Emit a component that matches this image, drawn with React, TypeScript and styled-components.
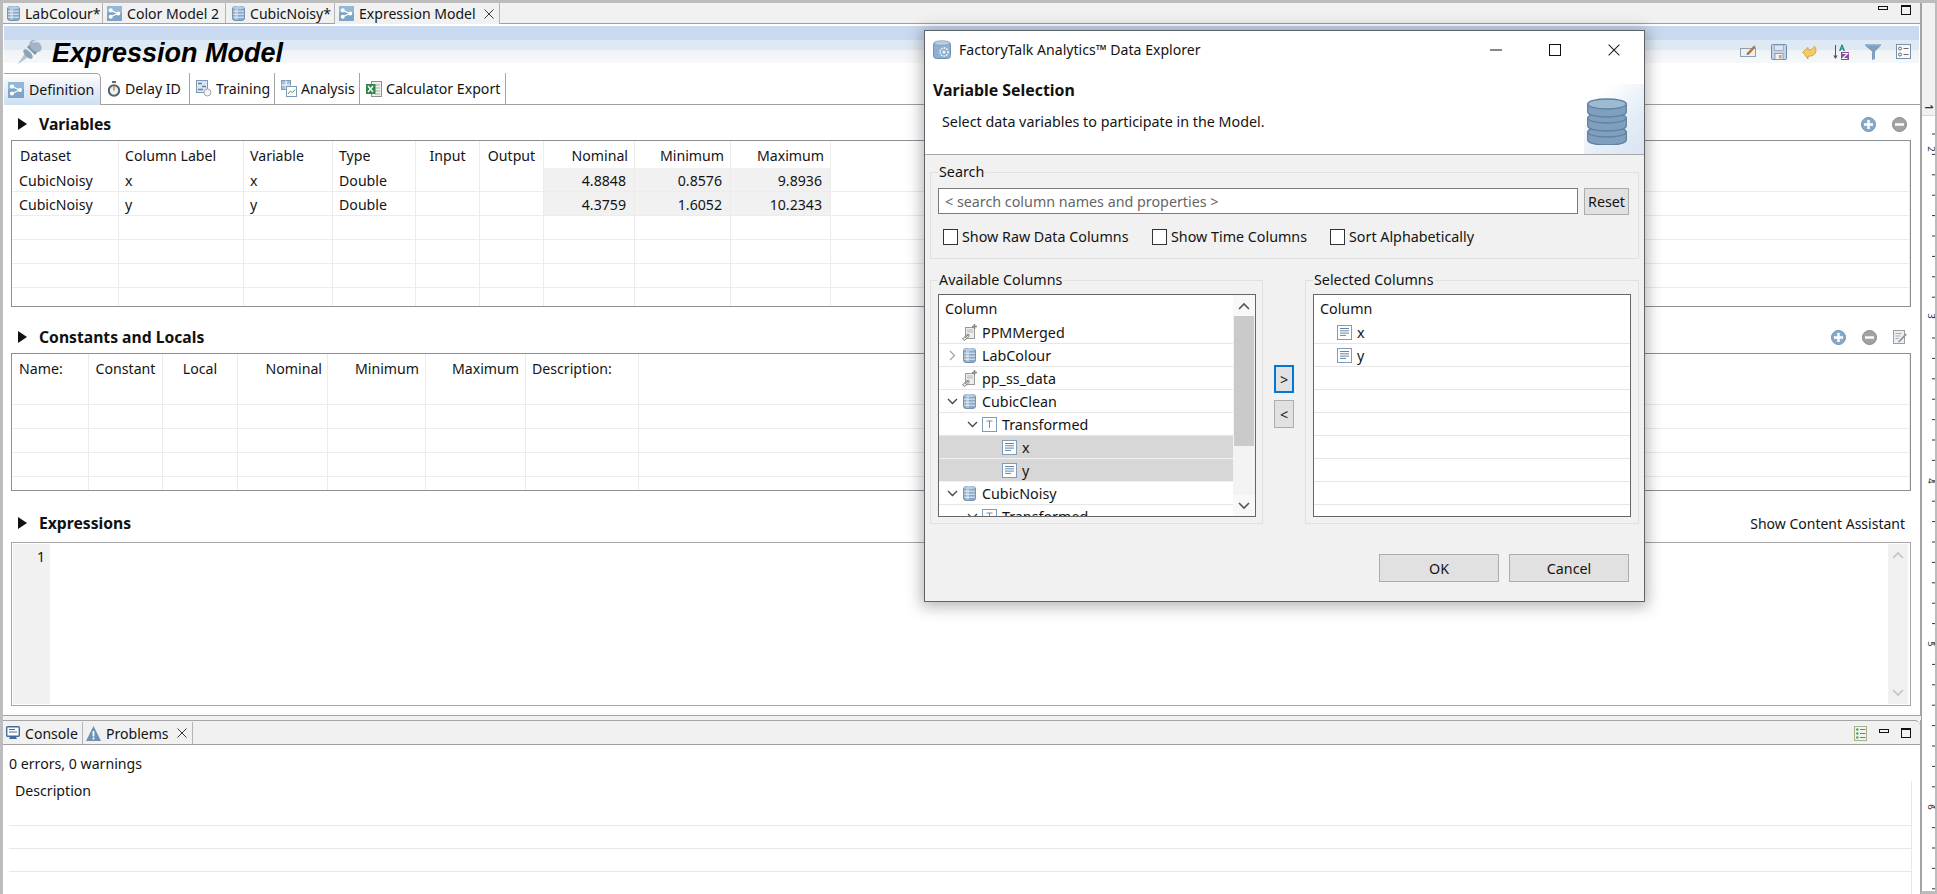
import React from "react";
import styled, { createGlobalStyle } from "styled-components";

const UI = `"Noto Sans", "Open Sans", sans-serif`;

const Global = createGlobalStyle`
  html, body { margin: 0; padding: 0; background: #fff; }
  body { width: 1937px; height: 894px; overflow: hidden; font-family: ${UI}; font-size: 14.15px; color: #141414; }
  * { box-sizing: border-box; }
`;

const Frame = styled.div`
  position: relative; width: 1937px; height: 894px; padding: 3px 2px 3px 3px;
  background: #bcbcbc; display: flex;
`;
const MainColumn = styled.div`width: 1918px; display: flex; flex-direction: column; background: #f4f4f4;`;
const RightRail = styled.div`width: 14px; display: flex; flex-direction: column; background: #fff; border-left: 1px solid #a4a4a4;`;
const RailTop = styled.div`height: 113px; flex: none; background: #f0f1f0; border-bottom: 1px solid #d8d8d8; display: flex; align-items: flex-end; justify-content: center; padding-bottom: 3px;`;
const RailDigit = styled.span`display: block; font-size: 10px; line-height: 10px; font-weight: 600; color: #333; transform: rotate(90deg);`;

/* ---------- top editor ---------- */
const EditorPane = styled.div`height: 713px; flex: none; display: flex; flex-direction: column; background: #fff; border-right: 1px solid #a4a4a4; border-bottom: 1px solid #a4a4a4;`;
const TabStrip = styled.div<{ $h: number }>`
  height: ${p => p.$h}px; flex: none; display: flex; background: #f0f1f0; border-bottom: 1px solid #a0a0a0;
`;
const StripTab = styled.div<{ $w: number; $pad: number; $active?: boolean }>`
  width: ${p => p.$w}px; flex: none; display: flex; align-items: center; gap: 5px; padding-left: ${p => p.$pad}px;
  border-right: 1px solid #b4b4b4; white-space: nowrap; height: calc(100% + ${p => (p.$active ? 1 : 0)}px);
  background: #f0f1f0; position: relative; font-size: 14.05px;
`;
const TabClose = styled.span`margin-left: 3px; display: flex;`;
const StripRight = styled.div`margin-left: auto; display: flex; align-items: flex-start; padding: 2px 9px 0 0; gap: 13px;`;
const MinBox = styled.span`display: block; width: 10px; height: 4px; border: 1px solid #111; margin-top: 1px;`;
const MaxBox = styled.span`display: block; width: 10px; height: 10px; border: 1px solid #111; border-top-width: 2px;`;

const Form = styled.div`flex: 1; display: flex; flex-direction: column; padding-top: 2px; background: #fff;`;
const Banner = styled.div`
  height: 37px; flex: none; margin: 0 1px 0 1px; display: flex; align-items: flex-start; padding: 13px 8px 0 13px;
  background: linear-gradient(#c9daf0 0, #c9daf0 38%, #dfe9f4 38%, #dfe9f4 65%, #f0f3f6 65%, #f6f8f9 100%);
`;
const FormTitle = styled.h1`
  margin: 1px 0 0 9px; font: italic bold 27px/26px "Liberation Sans", Arial, sans-serif; color: #000; white-space: nowrap;
`;
const Toolbar = styled.div`margin-left: auto; display: flex; gap: 15px; padding-top: 5px;`;
const FormTabs = styled.div`
  height: 32px; flex: none; margin: 10px 0 0 1px; display: flex; border-bottom: 1px solid #a0a0a0;
`;
const FormTab = styled.div<{ $w: number; $active?: boolean }>`
  width: ${p => p.$w}px; flex: none; height: ${p => (p.$active ? 32 : 31)}px; display: flex; align-items: center; gap: ${p => (p.$active ? 5 : 4)}px;
  padding-left: ${p => (p.$active ? 4 : 6)}px; white-space: nowrap; border-right: 1px solid #a4a4a4;
  ${p => p.$active ? `background: linear-gradient(#fff 0, #eef3f9 30%, #cddff2 100%); border-top: 1px solid #a4a4a4; border-top-right-radius: 5px;` : ``}
`;

const Section = styled.section<{ $top: number }>`margin-top: ${p => p.$top}px; padding: 0 9px 0 8px;`;
const SectionHead = styled.div<{ $mb: number }>`height: 28px; margin-bottom: ${p => p.$mb}px; display: flex; align-items: center; padding-left: 7px;`;
const Triangle = styled.span`width: 0; height: 0; border-left: 9px solid #111; border-top: 6px solid transparent; border-bottom: 6px solid transparent; margin-right: 12px;`;
const SectionTitle = styled.h2`margin: 0; font-size: 15.7px; font-weight: 700; color: #111;`;
const SectionTools = styled.div`margin-left: auto; display: flex; gap: 16px; padding-right: 4px; align-items: center;`;
const AssistLabel = styled.span`margin-left: auto; padding-right: 6px; font-size: 14px;`;

const Grid = styled.div<{ $h: number }>`height: ${p => p.$h}px; border: 1px solid #8b8f96; overflow: hidden; background: #fff;`;
const GridRow = styled.div<{ $cols: string; $h: number; $line?: boolean }>`
  display: grid; grid-template-columns: ${p => p.$cols}; height: ${p => p.$h}px;
  ${p => (p.$line ? `border-bottom: 1px solid #ececec;` : ``)}
`;
const GridCell = styled.div<{ $align?: string; $shade?: boolean; $pad?: number }>`
  display: flex; align-items: center; height: 100%; white-space: nowrap; border-right: 1px solid #ececec;
  padding: 2px ${p => (p.$align === "right" ? p.$pad ?? 7 : 6)}px 0 ${p => p.$pad && p.$align !== "right" ? p.$pad : 6}px;
  justify-content: ${p => (p.$align === "right" ? "flex-end" : p.$align === "center" ? "center" : "flex-start")};
  background: ${p => (p.$shade ? "#f0f1f0" : "transparent")};
`;

const CodeEditor = styled.div`height: 164px; border: 1px solid #a6a6a6; padding: 1px; display: flex;`;
const Gutter = styled.div`width: 37px; background: #f0f1f0; text-align: right; padding: 3px 5px 0 0; line-height: 20px;`;
const CodeArea = styled.div`flex: 1;`;
const EditorScroll = styled.div`width: 20px; background: #eff0ef; display: flex; flex-direction: column; justify-content: space-between; align-items: center; padding: 7px 0; margin-right: 1px;`;

const PanelGap = styled.div`height: 4px; flex: none; background: #f2f2f2;`;

/* ---------- bottom panel ---------- */
const BottomPanel = styled.div`flex: 1; display: flex; flex-direction: column; background: #fff; border-right: 1px solid #a4a4a4;`;
const PanelStrip = styled.div`
  height: 25px; flex: none; display: flex; background: #f0f1f0; border-top: 1px solid #a4a4a4; border-bottom: 1px solid #a0a0a0;
  border-top-right-radius: 5px; padding-top: 1px;
`;
const PanelRight = styled.div`margin-left: auto; display: flex; align-items: center; padding: 0 9px 0 0; gap: 12px;`;
const PanelMin = styled(MinBox)`margin-top: -5px;`;
const PanelMax = styled(MaxBox)`margin-top: -1px;`;
const PanelBody = styled.div`flex: 1; padding: 9px 8px 0 6px; position: relative;`;
const StatusLine = styled.div`line-height: 20px;`;
const DescHead = styled.div`line-height: 20px; margin-top: 7px; padding-left: 6px; height: 44px; border-right: 1px solid #e8e8e8;`;
const DescRow = styled.div`height: 23px; border-top: 1px solid #e8e8e8; border-right: 1px solid #e8e8e8;`;

/* ---------- dialog ---------- */
const Dialog = styled.div`
  position: absolute; left: 924px; top: 30px; width: 721px; height: 572px; display: flex; flex-direction: column;
  border: 1px solid #5f6368; background: #f0f1f0; box-shadow: 0 2px 14px 3px rgba(0,0,0,.28); font-size: 14.3px;
`;
const DialogTop = styled.div`height: 124px; flex: none; background: #fff; border-bottom: 1px solid #a8a8a8; display: flex; flex-direction: column;`;
const TitleBar = styled.div`height: 37px; flex: none; display: flex; align-items: center; padding-left: 8px; gap: 8px; font-size: 14.1px;`;
const WinControls = styled.div`margin-left: auto; display: flex; align-items: center; gap: 47px; padding-right: 24px;`;
const BannerRow = styled.div`flex: 1; display: flex; justify-content: space-between;`;
const BannerText = styled.div`padding: 12px 0 0 8px;`;
const DialogHeading = styled.h3`margin: 0; font-size: 15.9px; line-height: 20px; font-weight: 700; color: #111;`;
const DialogDesc = styled.p`margin: 12px 0 0 9px; line-height: 20px;`;
const BannerArt = styled.div`
  width: 60px; height: 70px; margin-top: 16px; flex: none; display: flex; padding: 0 0 9px 3px; align-items: flex-end;
  background: linear-gradient(135deg, #fff 20%, #e6eef7 60%, #d9e5f2 100%); border-top-left-radius: 40px;
`;
const DialogBody = styled.div`flex: 1; padding: 7px 5px 0 5px; display: flex; flex-direction: column;`;
const Group = styled.fieldset<{ $h: number }>`
  margin: 0; min-width: 0; height: ${p => p.$h}px; border: 1px solid #dfe0df; padding: 0 7px; position: relative;
`;
const GroupLegend = styled.legend`padding: 0 1px; line-height: 20px; font-size: 14.3px; height: 20px;`;
const SearchRow = styled.div`display: flex; gap: 6px; align-items: flex-start; margin-top: 6px;`;
const SearchInput = styled.div`width: 640px; height: 26px; border: 1px solid #7a7a7a; background: #fff; color: #666; padding-left: 6px; display: flex; align-items: center; white-space: nowrap;`;
const PushButton = styled.div<{ $w: number; $h: number; $focus?: boolean }>`
  width: ${p => p.$w}px; height: ${p => p.$h}px; background: #e1e1e1; display: flex; align-items: center; justify-content: center;
  border: ${p => (p.$focus ? "2px solid #0078d7" : "1px solid #adadad")};
`;
const CheckRow = styled.div`display: flex; margin: 12px 0 0 5px;`;
const CheckItem = styled.label<{ $w: number }>`width: ${p => p.$w}px; display: flex; align-items: center; gap: 4px; white-space: nowrap;`;
const CheckBox = styled.span`width: 15px; height: 16px; border: 1px solid #333; background: #fff; flex: none;`;
const ColumnsGrid = styled.div`display: grid; grid-template-columns: 333px 42px 334px; margin-top: 11px;`;
const MoveButtons = styled.div`display: flex; flex-direction: column; align-items: center; gap: 7px; padding-top: 95px;`;
const TreeBox = styled.div`width: 318px; height: 223px; margin-top: 4px; border: 1px solid #666; background: #fff; display: flex; overflow: hidden;`;
const TreeList = styled.div`flex: 1; min-width: 0;`;
const TreeHeader = styled.div`height: 26px; padding: 4px 0 0 6px; line-height: 20px;`;
const TreeRow = styled.div<{ $indent: number; $selected?: boolean }>`
  height: 23px; flex: none; display: flex; align-items: center; padding-left: ${p => p.$indent}px; white-space: nowrap;
  border-bottom: 1px solid ${p => (p.$selected ? "#f0f1f0" : "#e6e6e6")}; background: ${p => (p.$selected ? "#d7d7d7" : "#fff")};
`;
const Expander = styled.span`width: 15px; margin-right: 2px; flex: none; display: flex; justify-content: center;`;
const IconSlot = styled.span`width: 15px; flex: none; display: flex; justify-content: center;`;
const TreeLabel = styled.span`margin-left: 5px;`;
const TreeScroll = styled.div`width: 22px; flex: none; background: #f3f3f3; display: flex; flex-direction: column; align-items: stretch;`;
const ScrollArrow = styled.div<{ $h: number }>`height: ${p => p.$h}px; flex: none; display: flex; align-items: center; justify-content: center; background: #f8f8f8;`;
const ScrollThumb = styled.div`height: 130px; flex: none; background: #cacaca; margin: 0 1px;`;
const ScrollRest = styled.div`flex: 1;`;
const DialogActions = styled.div`display: flex; justify-content: flex-end; gap: 10px; padding: 30px 10px 0 0;`;

/* ---------- icons ---------- */
const Svg = styled.svg`display: block; flex: none;`;

const Db = ({ w = 13, h = 17 }: { w?: number; h?: number }) => (
  <Svg width={w} height={h} viewBox="0 0 13 17">
    <rect x=".5" y="1.5" width="12" height="14" rx="2.5" fill="#8ca8c8" stroke="#7693b4" />
    <rect x="3" y="2.5" width="3" height="12" fill="#c3d5e8" opacity=".75" />
    <ellipse cx="6.5" cy="2.6" rx="5.4" ry="1.6" fill="#b9cde2" />
    <path d="M1 6.2h11M1 9.2h11M1 12.2h11" stroke="#eef3f8" strokeWidth=".9" />
  </Svg>
);
const Model = ({ s = 16 }: { s?: number }) => (
  <Svg width={s} height={s} viewBox="0 0 16 16">
    <rect width="16" height="16" fill="#7ea5c8" />
    <rect width="16" height="7" fill="#94b7d5" />
    <path d="M4 4.5L11.5 8 4 11.5" fill="none" stroke="#fff" strokeWidth="1.3" />
    <circle cx="4" cy="4.5" r="2.1" fill="#fff" />
    <circle cx="12" cy="8" r="2.1" fill="#fff" />
    <circle cx="4" cy="11.5" r="2.1" fill="#fff" />
  </Svg>
);
const Pin = () => (
  <Svg width="26" height="26" viewBox="0 0 26 26">
    <path d="M.5 25.5L9 13l3.800 3.800z" fill="#b4c3d1" />
    <ellipse cx="11" cy="15" rx="6" ry="3" transform="rotate(45 11 15)" fill="#8fa3b6" />
    <path d="M10 8l8 8 3-3.500-7.500-7.500z" fill="#7f94a9" />
    <ellipse cx="18.500" cy="7" rx="7" ry="5" transform="rotate(45 18.500 7)" fill="#a2b4c5" />
    <path d="M16 3.500c1.800-1.400 4-1.400 5.600-.3" fill="none" stroke="#e0e8ef" strokeWidth="1.500" />
  </Svg>
);
const Stopwatch = () => (
  <Svg width="14" height="16" viewBox="0 0 13 16">
    <rect x="4.500" y="0" width="4" height="2" fill="#5c6a78" />
    <circle cx="6.500" cy="9.500" r="5.200" fill="#eef1f4" stroke="#55626f" strokeWidth="2" />
    <path d="M6.500 9.500V5.500" stroke="#c08a30" strokeWidth="1.500" />
  </Svg>
);
const Training = () => (
  <Svg width="16" height="17" viewBox="0 0 16 17">
    <rect x=".5" y=".5" width="11" height="12" fill="#dbe6f1" stroke="#7c9ab8" />
    <path d="M2 3.500h4M6 6.500h4M2 9.500h5" stroke="#5f83a8" strokeWidth="1.300" />
    <circle cx="11.500" cy="12.500" r="3.500" fill="#f2f4f6" stroke="#9aa7b4" />
  </Svg>
);
const Analysis = () => (
  <Svg width="16" height="17" viewBox="0 0 16 17">
    <rect x=".5" y=".5" width="9" height="9" fill="#a9c0d8" stroke="#7c9ab8" />
    <path d="M.5 5h9M5 .5v9" stroke="#fff" />
    <rect x="5.500" y="6.500" width="10" height="10" fill="#fff" stroke="#7c9ab8" />
    <path d="M7 14l2.500-3 2 1.500L14 9.500" fill="none" stroke="#5f9a6a" />
  </Svg>
);
const Excel = () => (
  <Svg width="16" height="16" viewBox="0 0 16 16">
    <rect x="5.500" y=".5" width="10" height="15" fill="#eef1ee" stroke="#8a948f" />
    <path d="M9 4h5M9 7h5M9 10h5M9 13h5" stroke="#9bb09f" />
    <rect x="0" y="3" width="9.500" height="10" fill="#2f8a47" />
    <path d="M2 5l5 6M7 5l-5 6" stroke="#fff" strokeWidth="1.400" />
  </Svg>
);
const ToolEdit = () => (
  <Svg width="16" height="16" viewBox="0 0 16 16">
    <rect x=".5" y="4.500" width="15" height="8" fill="#f0f0e8" stroke="#8d9fb3" />
    <path d="M7.500 8.500L14 1.500l1.800 1.500L9.500 10z" fill="#b5763a" />
    <path d="M6.500 11l1-2.500 2 1.500z" fill="#2d4fa0" />
  </Svg>
);
const PageEdit = () => (
  <Svg width="14" height="14" viewBox="0 0 14 14">
    <rect x=".5" y=".5" width="11" height="13" fill="#eceff2" stroke="#9a9fa5" />
    <path d="M2.500 3.500h6M2.500 6h5M2.500 8.500h3" stroke="#a9aeb4" />
    <path d="M5.500 11l7-7.500 1.300 1.200-7 7.300-1.800.4z" fill="#8e9399" />
  </Svg>
);
const ToolSave = () => (
  <Svg width="16" height="16" viewBox="0 0 16 16">
    <rect x=".5" y=".5" width="15" height="15" rx="1" fill="#c3d3e4" stroke="#6d8cae" />
    <rect x="3.500" y="1" width="9" height="5.500" fill="#dbe5ef" stroke="#89a2bb" strokeWidth=".7" />
    <rect x="4" y="9.500" width="8" height="6" fill="#edf1f5" stroke="#6d8cae" strokeWidth=".7" />
    <rect x="8" y="11" width="2.500" height="3.500" fill="#d6a44a" />
  </Svg>
);
const ToolBack = () => (
  <Svg width="16" height="16" viewBox="0 0 16 16">
    <path d="M.7 8L6 3.500v2.300c3 .4 5-.6 6.500-3.500 2.500 3.200 1.800 8-2.500 9.500-1.300.4-2.800.5-4 .3V15z" fill="#f5cb63" stroke="#c9983a" strokeWidth=".8" />
  </Svg>
);
const ToolSort = () => (
  <Svg width="17" height="16" viewBox="0 0 17 16">
    <path d="M2.500 1v11" stroke="#555" />
    <path d="M.3 11.500h4.400L2.500 15z" fill="#555" />
    <path d="M6 7l2.500-6.500h1L12 7h-1.600l-.5-1.400H8L7.500 7zM8.400 4.500h1.200L9 2.800z" fill="#1f8a80" />
    <rect x="8" y="8" width="8" height="8" fill="#8d4a9c" />
    <path d="M9.500 9.500h5L9.500 14.500h5" fill="none" stroke="#fff" strokeWidth="1.200" />
  </Svg>
);
const ToolFilter = () => (
  <Svg width="16" height="16" viewBox="0 0 16 16">
    <path d="M0 0h16v1.500L10 7.500V15l-3 1V7.500L0 1.500z" fill="#7f9fc0" />
    <path d="M0 0h16v1.500H0z" fill="#9bb6d2" />
  </Svg>
);
const ToolChecks = () => (
  <Svg width="15" height="15" viewBox="0 0 15 15">
    <rect x=".5" y=".5" width="14" height="14" fill="#f7f9fb" stroke="#7791ac" />
    <circle cx="4" cy="4.500" r="1.500" fill="none" stroke="#666" />
    <circle cx="4" cy="10.500" r="1.500" fill="none" stroke="#666" />
    <path d="M7.500 4.500h5M7.500 10.500h5" stroke="#666" />
  </Svg>
);
const RoundBtn = ({ kind, tone }: { kind: "plus" | "minus"; tone: "blue" | "gray" }) => (
  <Svg width="15" height="15" viewBox="0 0 15 15">
    <circle cx="7.500" cy="7.500" r="7" fill={tone === "blue" ? "#88a9c9" : "#a2a2a2"} stroke={tone === "blue" ? "#6f93b7" : "#8a8a8a"} />
    <path d={kind === "plus" ? "M3 7.500h9M7.500 3v9" : "M3 7.500h9"} stroke="#fff" strokeWidth="2.400" />
  </Svg>
);
const Cross = ({ s = 10 }: { s?: number }) => (
  <Svg width={s} height={s} viewBox="0 0 10 10">
    <path d="M.5.5l9 9M9.500.5l-9 9" stroke="#222" strokeWidth=".9" />
  </Svg>
);
const DocLines = () => (
  <Svg width="15" height="15" viewBox="0 0 15 15">
    <rect x=".5" y=".5" width="14" height="14" fill="#fff" stroke="#7f9cba" />
    <path d="M3 3.500h9M3 5.800h9M3 8.100h9M3 10.400h6" stroke="#6485a8" />
  </Svg>
);
const TypeT = () => (
  <Svg width="15" height="15" viewBox="0 0 15 15">
    <rect x=".5" y=".5" width="14" height="14" fill="#fff" stroke="#7f9cba" />
    <path d="M4.500 4h6M7.500 4v7" stroke="#6d8aa8" />
  </Svg>
);
const Merged = () => (
  <Svg width="15" height="17" viewBox="0 0 15 17">
    <rect x="3.500" y="3.500" width="9" height="11" fill="#eceeef" stroke="#9a9a9a" />
    <path d="M5 6h6M5 8h6" stroke="#b5b5b5" />
    <path d="M12.500 0v5M10 2.500h5" stroke="#888" strokeWidth="1.500" />
    <path d="M.5 15l5-5 2 2-5 4.500zM3 14l4-4" fill="#e6e6e6" stroke="#777" strokeWidth=".9" />
  </Svg>
);
const ChevRight = () => (
  <Svg width="7" height="11" viewBox="0 0 7 11"><path d="M1 1l4.500 4.500L1 10" fill="none" stroke="#a4a4a4" strokeWidth="1.300" /></Svg>
);
const ChevDown = () => (
  <Svg width="11" height="7" viewBox="0 0 11 7"><path d="M1 1l4.500 4.500L10 1" fill="none" stroke="#444" strokeWidth="1.300" /></Svg>
);
const ArrowV = ({ up, color = "#555" }: { up?: boolean; color?: string }) => (
  <Svg width="12" height="8" viewBox="0 0 12 8">
    <path d={up ? "M1 7l5-5 5 5" : "M1 1l5 5 5-5"} fill="none" stroke={color} strokeWidth="1.600" />
  </Svg>
);
const DbWithGear = () => (
  <Svg width="18" height="20" viewBox="0 0 18 20">
    <rect x=".5" y="2" width="17" height="16.500" rx="3" fill="#8fb0d0" stroke="#6f91b2" />
    <ellipse cx="9" cy="3" rx="8" ry="2.300" fill="#b8cde1" stroke="#6f91b2" strokeWidth=".6" />
    <circle cx="11" cy="12" r="4" fill="none" stroke="#f1f5f9" strokeWidth="1.500" strokeDasharray="1.600 1" />
    <circle cx="11" cy="12" r="1.500" fill="#f1f5f9" />
  </Svg>
);
const BigDb = () => (
  <Svg width="40" height="48" viewBox="0 0 40 48">
    {[30, 16, 2].map((y) => (
      <g key={y}>
        <path d={`M.7 ${y + 5}v${8}c0 3 8.500 5 19.300 5s19.300-2 19.300-5v-8z`} fill="#7f9fbf" stroke="#62819f" strokeWidth="1.300" />
        <ellipse cx="20" cy={y + 5} rx="19.300" ry="5" fill={y === 2 ? "#9dbad3" : "#7f9fbf"} stroke="#62819f" strokeWidth="1.300" />
      </g>
    ))}
  </Svg>
);
const Monitor = () => (
  <Svg width="14" height="14" viewBox="0 0 14 14">
    <rect x=".7" y=".7" width="12.600" height="9.600" rx="1" fill="#fff" stroke="#3f6c9b" strokeWidth="1.400" />
    <path d="M3 3.500h6M3 6h8" stroke="#3f6c9b" />
    <path d="M3 13h8l-1-2H4z" fill="#3f6c9b" />
  </Svg>
);
const Warn = () => (
  <Svg width="15" height="15" viewBox="0 0 15 15">
    <path d="M7.500 0L15 15H0z" fill="#6f8fb3" />
    <path d="M7.500 5v5.500M7.500 11.500v2" stroke="#fff" strokeWidth="1.800" />
  </Svg>
);
const GreenList = () => (
  <Svg width="13" height="15" viewBox="0 0 13 15">
    <rect x=".5" y=".5" width="12" height="14" fill="#eef3ee" stroke="#a7b38f" />
    <circle cx="3.300" cy="3.500" r="1.300" fill="#4aa56a" />
    <circle cx="3.300" cy="7.500" r="1.300" fill="#4aa56a" />
    <circle cx="3.300" cy="11.500" r="1.300" fill="#4aa56a" />
    <path d="M6 3.500h5.500M6 7.500h5.500M6 11.500h5.500" stroke="#6b7f95" />
  </Svg>
);
const Ruler = () => {
  const ticks = Array.from({ length: 38 }, (_, i) => i * 20.4 + 18);
  const digits: [string, number][] = [["2", 33], ["3", 200], ["4", 365], ["5", 528], ["6", 691]];
  return (
    <Svg width="13" height="774" viewBox="0 0 13 774">
      {ticks.map((y) => <path key={y} d={`M10 ${y}h3`} stroke="#333" />)}
      {digits.map(([d, y]) => (
        <text key={d} x="0" y="0" fontFamily="Noto Sans, sans-serif" fontSize="9.500" fill="#333" transform={`translate(5.500 ${y}) rotate(90)`} textAnchor="middle">{d}</text>
      ))}
    </Svg>
  );
};

/* ---------- data ---------- */
const varCols = "107px 125px 89px 83px 64px 64px 91px 96px 100px 1fr";
const varHead: [string, string, number?][] = [
  ["Dataset", "left", 8], ["Column Label", "left"], ["Variable", "left"], ["Type", "left"], ["Input", "center"], ["Output", "center"],
  ["Nominal", "right", 6], ["Minimum", "right", 6], ["Maximum", "right", 6], ["", "left"],
];
const varRows = [
  ["CubicNoisy", "x", "x", "Double", "", "", "4.8848", "0.8576", "9.8936"],
  ["CubicNoisy", "y", "y", "Double", "", "", "4.3759", "1.6052", "10.2343"],
];
const constCols = "77px 74px 75px 90px 98px 100px 113px 1fr";
const constHead: [string, string, number?][] = [
  ["Name:", "left", 7], ["Constant", "center"], ["Local", "center"], ["Nominal", "right", 5], ["Minimum", "right", 6],
  ["Maximum", "right", 6], ["Description:", "left"], ["", "left"],
];

const availableTree: { label: string; indent: number; exp?: "r" | "d"; icon: React.ReactNode; sel?: boolean }[] = [
  { label: "PPMMerged", indent: 6, icon: <Merged /> },
  { label: "LabColour", indent: 6, exp: "r", icon: <Db /> },
  { label: "pp_ss_data", indent: 6, icon: <Merged /> },
  { label: "CubicClean", indent: 6, exp: "d", icon: <Db /> },
  { label: "Transformed", indent: 26, exp: "d", icon: <TypeT /> },
  { label: "x", indent: 46, icon: <DocLines />, sel: true },
  { label: "y", indent: 46, icon: <DocLines />, sel: true },
  { label: "CubicNoisy", indent: 6, exp: "d", icon: <Db /> },
  { label: "Transformed", indent: 26, exp: "d", icon: <TypeT /> },
];

const TableRows = ({ cols, count, first, shadeFrom, data }: { cols: string; count: number; first: number; shadeFrom?: number; data: string[][] }) => {
  const n = cols.split(" ").length;
  return (
    <>
      {Array.from({ length: count }, (_, r) => (
        <GridRow key={r} $cols={cols} $h={r === 0 ? first : 24} $line>
          {Array.from({ length: n }, (_, c) => {
            const txt = data[r]?.[c] ?? "";
            const numeric = shadeFrom !== undefined && c >= shadeFrom && c < shadeFrom + 3;
            return (
              <GridCell key={c} $align={numeric ? "right" : "left"} $pad={c === 0 ? 7 : numeric ? 8 : undefined} $shade={numeric && r < data.length}>
                {txt}
              </GridCell>
            );
          })}
        </GridRow>
      ))}
    </>
  );
};

const HeadRow = ({ cols, items, h }: { cols: string; items: [string, string, number?][]; h: number }) => (
  <GridRow $cols={cols} $h={h}>
    {items.map(([t, a, pad], i) => <GridCell key={i} $align={a} $pad={pad}>{t}</GridCell>)}
  </GridRow>
);

export default function App() {
  return (
    <Frame>
      <Global />
      <MainColumn>
        <EditorPane>
          <TabStrip $h={21}>
            <StripTab $w={100} $pad={4}><Db />LabColour*</StripTab>
            <StripTab $w={123} $pad={4}><Model s={15} />Color Model 2</StripTab>
            <StripTab $w={109} $pad={6}><Db />CubicNoisy*</StripTab>
            <StripTab $w={165} $pad={4} $active><Model s={15} />Expression Model<TabClose><Cross /></TabClose></StripTab>
            <StripRight><MinBox /><MaxBox /></StripRight>
          </TabStrip>
          <Form>
            <Banner>
              <Pin />
              <FormTitle>Expression Model</FormTitle>
              <Toolbar>
                <ToolEdit /><ToolSave /><ToolBack /><ToolSort /><ToolFilter /><ToolChecks />
              </Toolbar>
            </Banner>
            <FormTabs>
              <FormTab $w={97} $active><Model />Definition</FormTab>
              <FormTab $w={89}><Stopwatch />Delay ID</FormTab>
              <FormTab $w={85}><Training />Training</FormTab>
              <FormTab $w={85}><Analysis />Analysis</FormTab>
              <FormTab $w={146}><Excel />Calculator Export</FormTab>
            </FormTabs>
            <Section $top={5}>
              <SectionHead $mb={2}>
                <Triangle /><SectionTitle>Variables</SectionTitle>
                <SectionTools><RoundBtn kind="plus" tone="blue" /><RoundBtn kind="minus" tone="gray" /></SectionTools>
              </SectionHead>
              <Grid $h={167}>
                <HeadRow cols={varCols} items={varHead} h={27} />
                <TableRows cols={varCols} count={6} first={24} shadeFrom={6} data={varRows} />
              </Grid>
            </Section>
            <Section $top={16}>
              <SectionHead $mb={2}>
                <Triangle /><SectionTitle>Constants and Locals</SectionTitle>
                <SectionTools>
                  <RoundBtn kind="plus" tone="blue" /><RoundBtn kind="minus" tone="gray" /><PageEdit />
                </SectionTools>
              </SectionHead>
              <Grid $h={138}>
                <HeadRow cols={constCols} items={constHead} h={26} />
                <TableRows cols={constCols} count={5} first={25} data={[]} />
              </Grid>
            </Section>
            <Section $top={18}>
              <SectionHead $mb={5}>
                <Triangle /><SectionTitle>Expressions</SectionTitle>
                <AssistLabel>Show Content Assistant</AssistLabel>
              </SectionHead>
              <CodeEditor>
                <Gutter>1</Gutter>
                <CodeArea />
                <EditorScroll><ArrowV up color="#c4c4c4" /><ArrowV color="#c4c4c4" /></EditorScroll>
              </CodeEditor>
            </Section>
          </Form>
        </EditorPane>
        <PanelGap />
        <BottomPanel>
          <PanelStrip>
            <StripTab $w={80} $pad={3}><Monitor />Console</StripTab>
            <StripTab $w={110} $pad={3}><Warn />Problems<TabClose><Cross /></TabClose></StripTab>
            <PanelRight><GreenList /><PanelMin /><PanelMax /></PanelRight>
          </PanelStrip>
          <PanelBody>
            <StatusLine>0 errors, 0 warnings</StatusLine>
            <DescHead>Description</DescHead>
            <DescRow /><DescRow /><DescRow />
          </PanelBody>
        </BottomPanel>
      </MainColumn>
      <RightRail>
        <RailTop><RailDigit>1</RailDigit></RailTop>
        <Ruler />
      </RightRail>

      <Dialog>
        <DialogTop>
          <TitleBar>
            <DbWithGear />
            FactoryTalk Analytics™ Data Explorer
            <WinControls>
              <Svg width="12" height="12" viewBox="0 0 12 12"><path d="M0 6h12" stroke="#111" /></Svg>
              <Svg width="12" height="12" viewBox="0 0 12 12"><rect x=".5" y=".5" width="11" height="11" fill="none" stroke="#111" /></Svg>
              <Cross s={12} />
            </WinControls>
          </TitleBar>
          <BannerRow>
            <BannerText>
              <DialogHeading>Variable Selection</DialogHeading>
              <DialogDesc>Select data variables to participate in the Model.</DialogDesc>
            </BannerText>
            <BannerArt><BigDb /></BannerArt>
          </BannerRow>
        </DialogTop>
        <DialogBody>
          <Group $h={97}>
            <GroupLegend>Search</GroupLegend>
            <SearchRow>
              <SearchInput>&lt; search column names and properties &gt;</SearchInput>
              <PushButton $w={45} $h={27}>Reset</PushButton>
            </SearchRow>
            <CheckRow>
              <CheckItem $w={209}><CheckBox />Show Raw Data Columns</CheckItem>
              <CheckItem $w={178}><CheckBox />Show Time Columns</CheckItem>
              <CheckItem $w={200}><CheckBox />Sort Alphabetically</CheckItem>
            </CheckRow>
          </Group>
          <ColumnsGrid>
            <Group $h={254}>
              <GroupLegend>Available Columns</GroupLegend>
              <TreeBox>
                <TreeList>
                  <TreeHeader>Column</TreeHeader>
                  {availableTree.map((r, i) => (
                    <TreeRow key={i} $indent={r.indent} $selected={r.sel}>
                      <Expander>{r.exp === "r" ? <ChevRight /> : r.exp === "d" ? <ChevDown /> : null}</Expander>
                      <IconSlot>{r.icon}</IconSlot>
                      <TreeLabel>{r.label}</TreeLabel>
                    </TreeRow>
                  ))}
                </TreeList>
                <TreeScroll>
                  <ScrollArrow $h={21}><ArrowV up /></ScrollArrow>
                  <ScrollThumb />
                  <ScrollRest />
                  <ScrollArrow $h={21}><ArrowV /></ScrollArrow>
                </TreeScroll>
              </TreeBox>
            </Group>
            <MoveButtons>
              <PushButton $w={20} $h={28} $focus>&gt;</PushButton>
              <PushButton $w={20} $h={28}>&lt;</PushButton>
            </MoveButtons>
            <Group $h={254}>
              <GroupLegend>Selected Columns</GroupLegend>
              <TreeBox>
                <TreeList>
                  <TreeHeader>Column</TreeHeader>
                  <TreeRow $indent={6}><Expander /><IconSlot><DocLines /></IconSlot><TreeLabel>x</TreeLabel></TreeRow>
                  <TreeRow $indent={6}><Expander /><IconSlot><DocLines /></IconSlot><TreeLabel>y</TreeLabel></TreeRow>
                  {Array.from({ length: 7 }, (_, i) => <TreeRow key={i} $indent={6} />)}
                </TreeList>
              </TreeBox>
            </Group>
          </ColumnsGrid>
          <DialogActions>
            <PushButton $w={120} $h={28}>OK</PushButton>
            <PushButton $w={120} $h={28}>Cancel</PushButton>
          </DialogActions>
        </DialogBody>
      </Dialog>
    </Frame>
  );
}
